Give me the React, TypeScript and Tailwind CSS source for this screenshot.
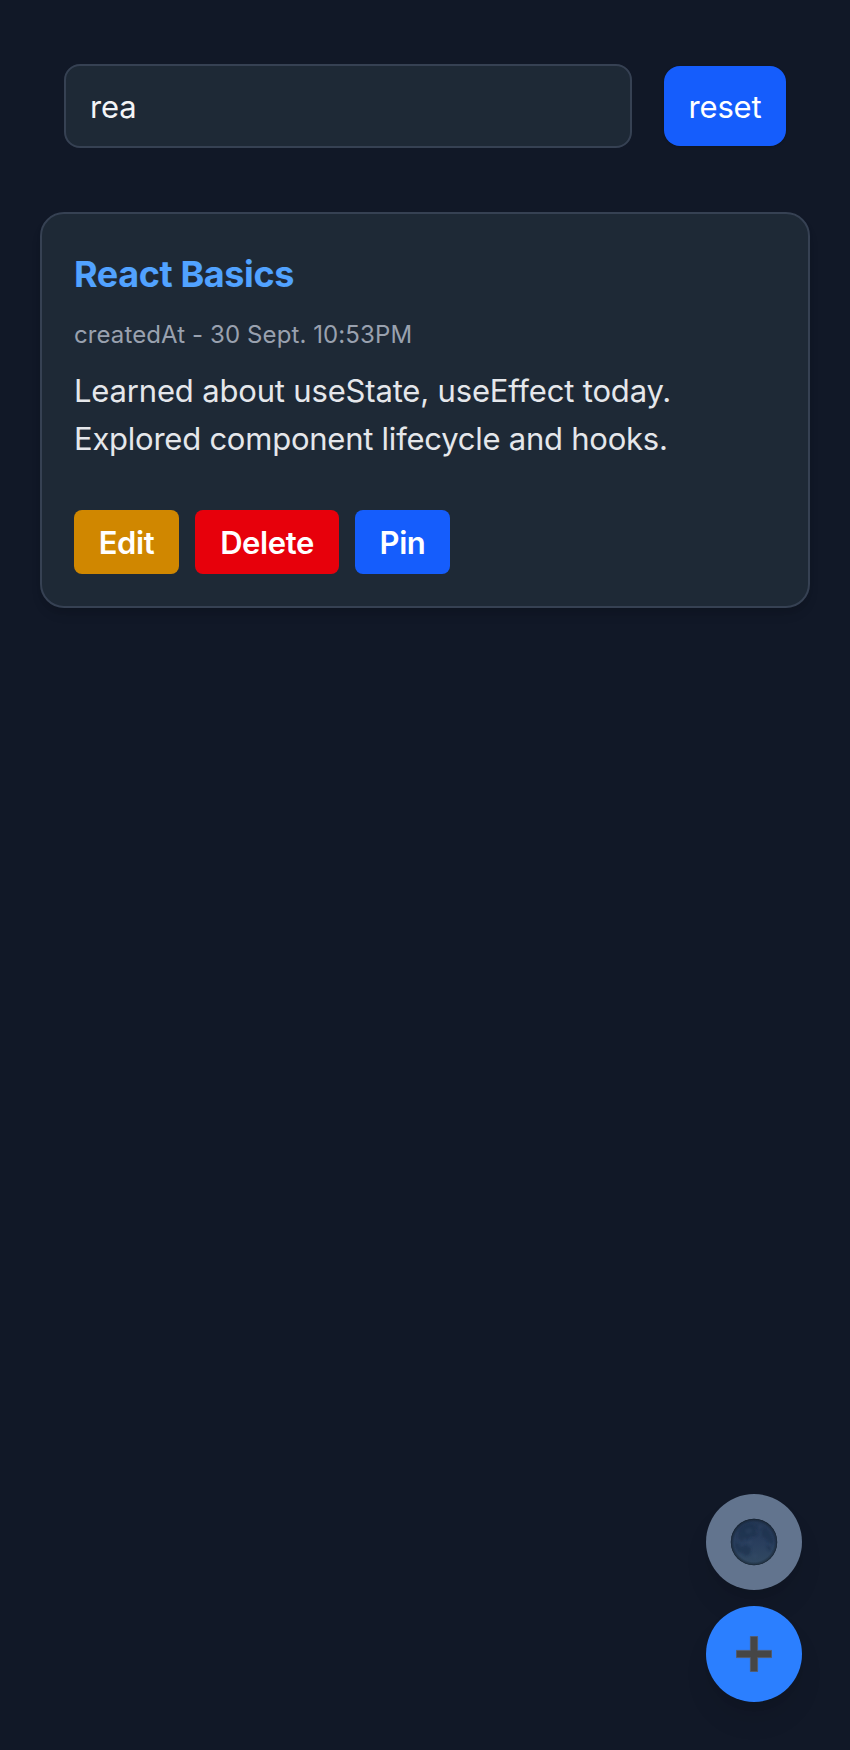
import React, { useState } from "react";

function MoonIcon() {
  return (
    <svg width="48" height="48" viewBox="0 0 48 48" aria-hidden="true">
      <defs>
        <linearGradient id="moon-body" x1="0" y1="0" x2="0" y2="1">
          <stop offset="0" stopColor="#223552" />
          <stop offset="0.55" stopColor="#2a3f5e" />
          <stop offset="1" stopColor="#324a62" />
        </linearGradient>
        <radialGradient id="moon-edge">
          <stop offset="0.85" stopColor="#14202c" stopOpacity="0" />
          <stop offset="0.96" stopColor="#14202c" stopOpacity="0.5" />
          <stop offset="1" stopColor="#101820" stopOpacity="0.9" />
        </radialGradient>
        <filter id="moon-soft" x="-20%" y="-20%" width="140%" height="140%">
          <feGaussianBlur stdDeviation="1" />
        </filter>
      </defs>
      <circle cx="24" cy="24" r="23.2" fill="url(#moon-body)" />
      <g fill="#1f304e" opacity="0.65" filter="url(#moon-soft)">
        <path d="M9 10 Q15 4 22 6 L27 9 L25 13 L28 16 L24 19 L21 18 L18 22 L14 20 L12 24 L8 20Z" />
        <path d="M32 12 L36 10 L40 14 L44 22 L43 27 L38 24 L35 20 L32 19Z" />
        <path d="M5 24 L9 26 L11 29 L16 27 L21 30 L20 36 L16 38 L12 35 L8 34 L5 30Z" />
        <path d="M36 27 L41 29 L41 33 L38 32Z" />
      </g>
      <g fill="#3a4f70" opacity="0.25" filter="url(#moon-soft)">
        <path d="M15 12 L20 10 L23 13 L19 16 L16 15Z" />
        <path d="M27 8 L32 7 L31 11Z" />
        <circle cx="20" cy="24" r="2.2" />
        <circle cx="25" cy="38" r="2.4" />
      </g>
      <circle cx="24" cy="24" r="23.2" fill="url(#moon-edge)" />
    </svg>
  );
}

function PlusIcon() {
  return (
    <svg width="36" height="36" viewBox="0 0 36 36" aria-hidden="true">
      <path d="M14.4 .4h7.2v14h14v7.2h-14v14h-7.2v-14h-14v-7.2h14z" fill="#464646" stroke="#5b5b60" strokeWidth=".8" />
    </svg>
  );
}

export default function App() {
  const [query, setQuery] = useState("rea");
  return (
    <main className="flex min-h-[1750px] w-full flex-col bg-[#111827] px-10 pt-16 pb-12 font-[Inter,sans-serif] text-[31px] text-gray-100">
      <div className="flex items-center gap-8 px-6">
        <input
          className="h-[84px] min-w-0 flex-1 rounded-2xl border-2 border-[#364153] bg-[#1e2936] px-6 tracking-[-0.2px] text-gray-100 outline-none"
          value={query}
          onChange={(e) => setQuery(e.target.value)}
        />
        <button
          className="h-20 w-[122px] rounded-2xl bg-blue-600 pt-0.5 tracking-[-0.15px] text-white shadow-sm"
          onClick={() => setQuery("")}
        >
          reset
        </button>
      </div>
      <article className="mt-16 flex h-[396px] flex-col items-start rounded-3xl border-2 border-[#364153] bg-[#1e2936] px-8 pt-8 shadow-[0_8px_12px_-2px_rgba(0,0,0,0.1),0_4px_8px_-4px_rgba(0,0,0,0.1)]">
        <h2 className="h-[56px] whitespace-nowrap text-[36px] leading-[56px] font-bold tracking-[-0.4px] text-blue-400">React Basics</h2>
        <p className="mt-[17px] h-8 whitespace-nowrap text-[24px] leading-8 tracking-[0.1px] text-[#99a1af]">createdAt - 30 Sept. 10:53PM</p>
        <p className="mt-4 whitespace-nowrap leading-[48px] text-gray-200">
          <span className="tracking-[-0.17px]">Learned about useState, useEffect today.</span>
          <br />
          <span className="tracking-[-0.24px]">Explored component lifecycle and hooks.</span>
        </p>
        <div className="mt-[47px] flex gap-4 font-semibold tracking-[-0.4px] text-white">
          <button className="h-16 w-[105px] rounded-lg bg-yellow-600 pt-0.5">Edit</button>
          <button className="h-16 w-36 rounded-lg bg-red-600 pt-0.5">Delete</button>
          <button className="h-16 w-[95px] rounded-lg bg-blue-600 pt-0.5">Pin</button>
        </div>
      </article>
      <div className="mt-auto mr-2 flex flex-col gap-4 self-end">
        <button aria-label="Toggle theme" className="flex size-24 items-center justify-center rounded-full bg-slate-500 shadow-[0_20px_30px_-6px_rgba(0,0,0,0.1),0_8px_12px_-8px_rgba(0,0,0,0.1)]">
          <MoonIcon />
        </button>
        <button aria-label="Add note" className="flex size-24 items-center justify-center rounded-full bg-blue-500 shadow-[0_20px_30px_-6px_rgba(0,0,0,0.1),0_8px_12px_-8px_rgba(0,0,0,0.1)]">
          <PlusIcon />
        </button>
      </div>
    </main>
  );
}
